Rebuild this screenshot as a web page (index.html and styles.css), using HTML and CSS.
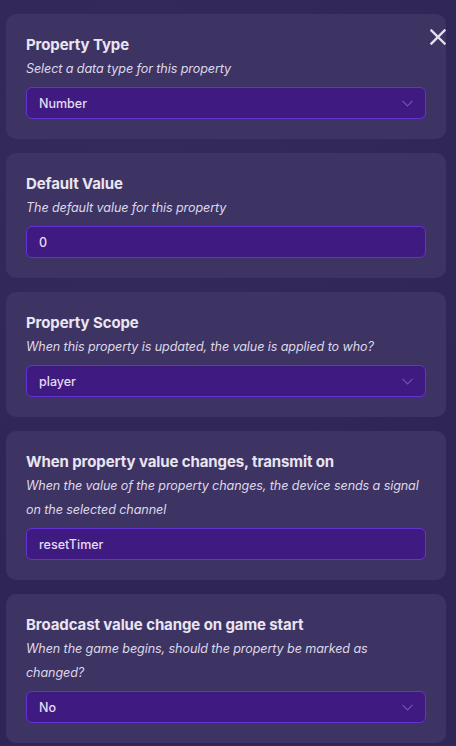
FILE: index.html
```html
<!DOCTYPE html>
<html>
<head>
<meta charset="utf-8">
<link rel="stylesheet" href="styles.css">
</head>
<body>
<div class="panel">
  <button class="close" aria-label="Close">
    <svg width="16" height="16" viewBox="0 0 16 16"><path d="M1.5 1.5 L14.5 14.5 M14.5 1.5 L1.5 14.5" stroke="#e4e0ec" stroke-width="2.4" stroke-linecap="square" fill="none"/></svg>
  </button>
  <section class="card">
    <div class="title">Property Type</div>
    <div class="desc">Select a data type for this property</div>
    <div class="field select"><span>Number</span><svg class="chev" width="11" height="7" viewBox="0 0 11 7"><path d="M0.5 0.8 L5.5 5.8 L10.5 0.8" stroke="#7452b4" stroke-width="1.2" fill="none"/></svg></div>
  </section>
  <section class="card">
    <div class="title">Default Value</div>
    <div class="desc">The default value for this property</div>
    <div class="field"><span>0</span></div>
  </section>
  <section class="card">
    <div class="title">Property Scope</div>
    <div class="desc">When this property is updated, the value is applied to who?</div>
    <div class="field select"><span>player</span><svg class="chev" width="11" height="7" viewBox="0 0 11 7"><path d="M0.5 0.8 L5.5 5.8 L10.5 0.8" stroke="#7452b4" stroke-width="1.2" fill="none"/></svg></div>
  </section>
  <section class="card">
    <div class="title">When property value changes, transmit on</div>
    <div class="desc">When the value of the property changes, the device sends a signal on the selected channel</div>
    <div class="field"><span>resetTimer</span></div>
  </section>
  <section class="card">
    <div class="title">Broadcast value change on game start</div>
    <div class="desc">When the game begins, should the property be marked as changed?</div>
    <div class="field select"><span>No</span><svg class="chev" width="11" height="7" viewBox="0 0 11 7"><path d="M0.5 0.8 L5.5 5.8 L10.5 0.8" stroke="#7452b4" stroke-width="1.2" fill="none"/></svg></div>
  </section>
</div>
</body>
</html>
```
FILE: styles.css
```css
html, body {
  margin: 0;
  padding: 0;
}
body {
  width: 456px;
  height: 746px;
  overflow: hidden;
  background: #2f2657;
  background-image: radial-gradient(circle at 30% 20%, #352a5c 0%, rgba(47,38,87,0) 60%);
  font-family: Inter, "Noto Sans", sans-serif;
}
.panel {
  position: relative;
  display: flex;
  flex-direction: column;
  gap: 14px;
  padding: 14px 10px 0 6px;
}
.close {
  position: absolute;
  top: 29px;
  left: 430px;
  width: 16px;
  height: 16px;
  padding: 0;
  border: 0;
  background: none;
  z-index: 2;
}
.close svg { display: block; }
.card {
  background: #3e3464;
  border-radius: 10px;
  padding: 19px 20px 20px;
  display: flex;
  flex-direction: column;
}
.title {
  color: #e9e5f1;
  font-size: 15px;
  font-weight: 700;
  line-height: 24px;
  letter-spacing: -0.1px;
}
.desc {
  color: #ddd8e8;
  font-size: 12.6px;
  font-style: italic;
  line-height: 24px;
  letter-spacing: -0.1px;
}
.field {
  margin-top: 6px;
  height: 32px;
  box-sizing: border-box;
  border: 1px solid #6432d4;
  border-radius: 6px;
  background: #3f1a81;
  color: #e4dcf2;
  font-size: 12.5px;
  font-weight: 500;
  padding: 0 12px;
  display: flex;
  align-items: center;
  justify-content: space-between;
}
.chev {
  display: block;
}
```
